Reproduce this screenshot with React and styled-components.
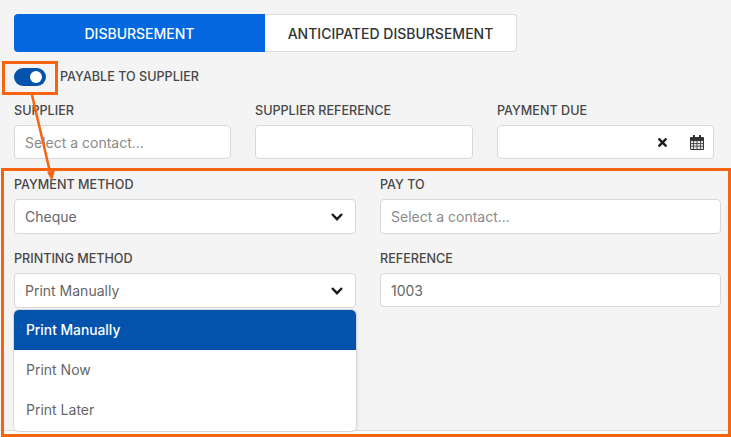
import styled, { createGlobalStyle } from 'styled-components';
import { FaTimes } from 'react-icons/fa';

const GlobalStyle = createGlobalStyle`
  html, body {
    margin: 0;
    padding: 0;
    background: #f4f4f4;
    font-family: Inter, "Liberation Sans", sans-serif;
  }
`;

const Page = styled.div`
  position: relative;
  width: 731px;
  height: 437px;
  overflow: hidden;
  box-sizing: border-box;
  padding: 14px 10px 0 14px;
  background: #f4f4f4;
`;

const Tabs = styled.div`
  display: flex;
  width: 503px;
  height: 38px;
`;

const Tab = styled.div`
  flex: ${({ $active }) => ($active ? '0 0 251px' : '1')};
  display: flex;
  align-items: center;
  justify-content: center;
  box-sizing: border-box;
  font-size: 14px;
  font-weight: 500;
  color: ${({ $active }) => ($active ? '#fff' : '#333')};
  background: ${({ $active }) => ($active ? '#0368e0' : '#fff')};
  border: ${({ $active }) => ($active ? 'none' : '1px solid #ddd')};
  border-left: none;
  border-radius: ${({ $active }) => ($active ? '4px 0 0 4px' : '0 4px 4px 0')};
`;

const ToggleRow = styled.div`
  display: flex;
  align-items: center;
  gap: 14px;
  margin-top: 16px;
  height: 18px;
`;

const Track = styled.div`
  position: relative;
  width: 32px;
  height: 18px;
  border-radius: 9px;
  background: #0353ad;
`;

const Knob = styled.div`
  position: absolute;
  top: 3px;
  right: 4px;
  width: 12px;
  height: 12px;
  border-radius: 50%;
  background: #fff;
`;

const Label = styled.div`
  font-size: 12.6px;
  line-height: 15px;
  font-weight: 500;
  color: #484848;
  white-space: nowrap;
`;

const ToggleLabel = styled(Label)`
  margin-bottom: 1px;
`;

const TopGrid = styled.div`
  display: grid;
  grid-template-columns: 217px 218px 217px;
  column-gap: 24px;
  margin-top: 17px;
`;

const Section = styled.div`
  box-sizing: border-box;
  height: 254px;
  margin: 18px -10px 0 -14px;
  padding: 0 10px 0 14px;
  border-bottom: 1px solid #dcdcdc;
`;

const BottomGrid = styled.div`
  display: grid;
  grid-template-columns: 342px 341px;
  column-gap: 24px;
  row-gap: 17px;
`;

const SectionEnd = styled.div`
  height: 7px;
  margin: 0 -10px 0 -14px;
  background: #fbfbfb;
`;

const Field = styled.div`
  position: relative;
  display: flex;
  flex-direction: column;
  gap: 7px;
`;

const Control = styled.div`
  display: flex;
  align-items: center;
  justify-content: space-between;
  box-sizing: border-box;
  height: ${({ $h }) => $h || 34}px;
  padding: 0 10px;
  background: #fff;
  border: 1px solid #d8d8d8;
  border-radius: 4px;
  font-size: 14px;
  color: ${({ $muted }) => ($muted ? '#8a8a8a' : '#666')};
`;

const Icons = styled.div`
  display: flex;
  align-items: center;
  gap: 21px;
  margin-left: auto;
  margin-right: -1px;
  color: #1c1c1c;
`;

const Menu = styled.div`
  position: absolute;
  top: 59px;
  left: 0;
  right: 0;
  height: 121px;
  background: #fff;
  box-shadow: 0 0 0 1px #d8d8d8, 2px 0 3px rgba(0, 0, 0, 0.07);
  border-radius: 5px;
  overflow: hidden;
  z-index: 1;
`;

const Option = styled.div`
  display: flex;
  align-items: center;
  box-sizing: border-box;
  height: 40px;
  padding: 0 12px 1px;
  font-size: ${({ $selected }) => ($selected ? 13.8 : 14)}px;
  font-weight: ${({ $selected }) => ($selected ? 500 : 400)};
  color: ${({ $selected }) => ($selected ? '#fff' : '#666')};
  background: ${({ $selected }) => ($selected ? '#0353ad' : '#fff')};
`;

const Frame = styled.div`
  position: absolute;
  box-sizing: border-box;
  border: 3px solid #f6640f;
  z-index: 2;
  pointer-events: none;
`;

const ToggleFrame = styled(Frame)`
  left: 2px;
  top: 61px;
  width: 56px;
  height: 34px;
`;

const PanelFrame = styled(Frame)`
  left: 1px;
  top: 168px;
  width: 730px;
  height: 269px;
`;

const Arrow = styled.svg`
  position: absolute;
  left: 0;
  top: 0;
  z-index: 3;
  pointer-events: none;
`;

const ChevronIcon = styled.svg`
  margin-right: 2px;
`;

const Chevron = () => (
  <ChevronIcon width="12" height="8" viewBox="0 0 12 8" fill="none">
    <path d="M1 1 L6 6.2 L11 1" stroke="#1c1c1c" strokeWidth="2.4" />
  </ChevronIcon>
);

const CalendarIcon = () => (
  <svg width="14" height="15" viewBox="0 0 14 15">
    <path fill="#333" d="M3 0h2v2h4V0h2v2h2a1 1 0 0 1 1 1v11a1 1 0 0 1-1 1H1a1 1 0 0 1-1-1V3a1 1 0 0 1 1-1h2z" />
    <path fill="#e4e4e4" d="M1 6h2.2v2H1zM4 6h2.6v2H4zM7.4 6H10v2H7.4zM10.8 6H13v2h-2.2zM1 8.8h2.2v2H1zM4 8.8h2.6v2H4zM7.4 8.8H10v2H7.4zM10.8 8.8H13v2h-2.2zM1 11.6h2.2V14H1zM4 11.6h2.6V14H4zM7.4 11.6H10V14H7.4zM10.8 11.6H13V14h-2.2z" />
  </svg>
);

export default function App() {
  return (
    <Page>
      <GlobalStyle />
      <Tabs>
        <Tab $active>DISBURSEMENT</Tab>
        <Tab>ANTICIPATED DISBURSEMENT</Tab>
      </Tabs>
      <ToggleRow>
        <Track><Knob /></Track>
        <ToggleLabel>PAYABLE TO SUPPLIER</ToggleLabel>
      </ToggleRow>
      <TopGrid>
        <Field>
          <Label>SUPPLIER</Label>
          <Control $muted>Select a contact...</Control>
        </Field>
        <Field>
          <Label>SUPPLIER REFERENCE</Label>
          <Control />
        </Field>
        <Field>
          <Label>PAYMENT DUE</Label>
          <Control>
            <Icons>
              <FaTimes size={13} />
              <CalendarIcon />
            </Icons>
          </Control>
        </Field>
      </TopGrid>
      <Section>
        <BottomGrid>
          <Field>
            <Label>PAYMENT METHOD</Label>
            <Control $h={35}>Cheque<Chevron /></Control>
          </Field>
          <Field>
            <Label>PAY TO</Label>
            <Control $h={35} $muted>Select a contact...</Control>
          </Field>
          <Field>
            <Label>PRINTING METHOD</Label>
            <Control $h={35}>Print Manually<Chevron /></Control>
            <Menu>
              <Option $selected>Print Manually</Option>
              <Option>Print Now</Option>
              <Option>Print Later</Option>
            </Menu>
          </Field>
          <Field>
            <Label>REFERENCE</Label>
            <Control>1003</Control>
          </Field>
        </BottomGrid>
      </Section>
      <SectionEnd />
      <ToggleFrame />
      <PanelFrame />
      <Arrow width="731" height="437" viewBox="0 0 731 437">
        <path d="M32 95 L50 172" stroke="#f6640f" strokeWidth="2.5" fill="none" />
        <path d="M47 172 L55 170 L52 181 Z" fill="#f6640f" />
      </Arrow>
    </Page>
  );
}
